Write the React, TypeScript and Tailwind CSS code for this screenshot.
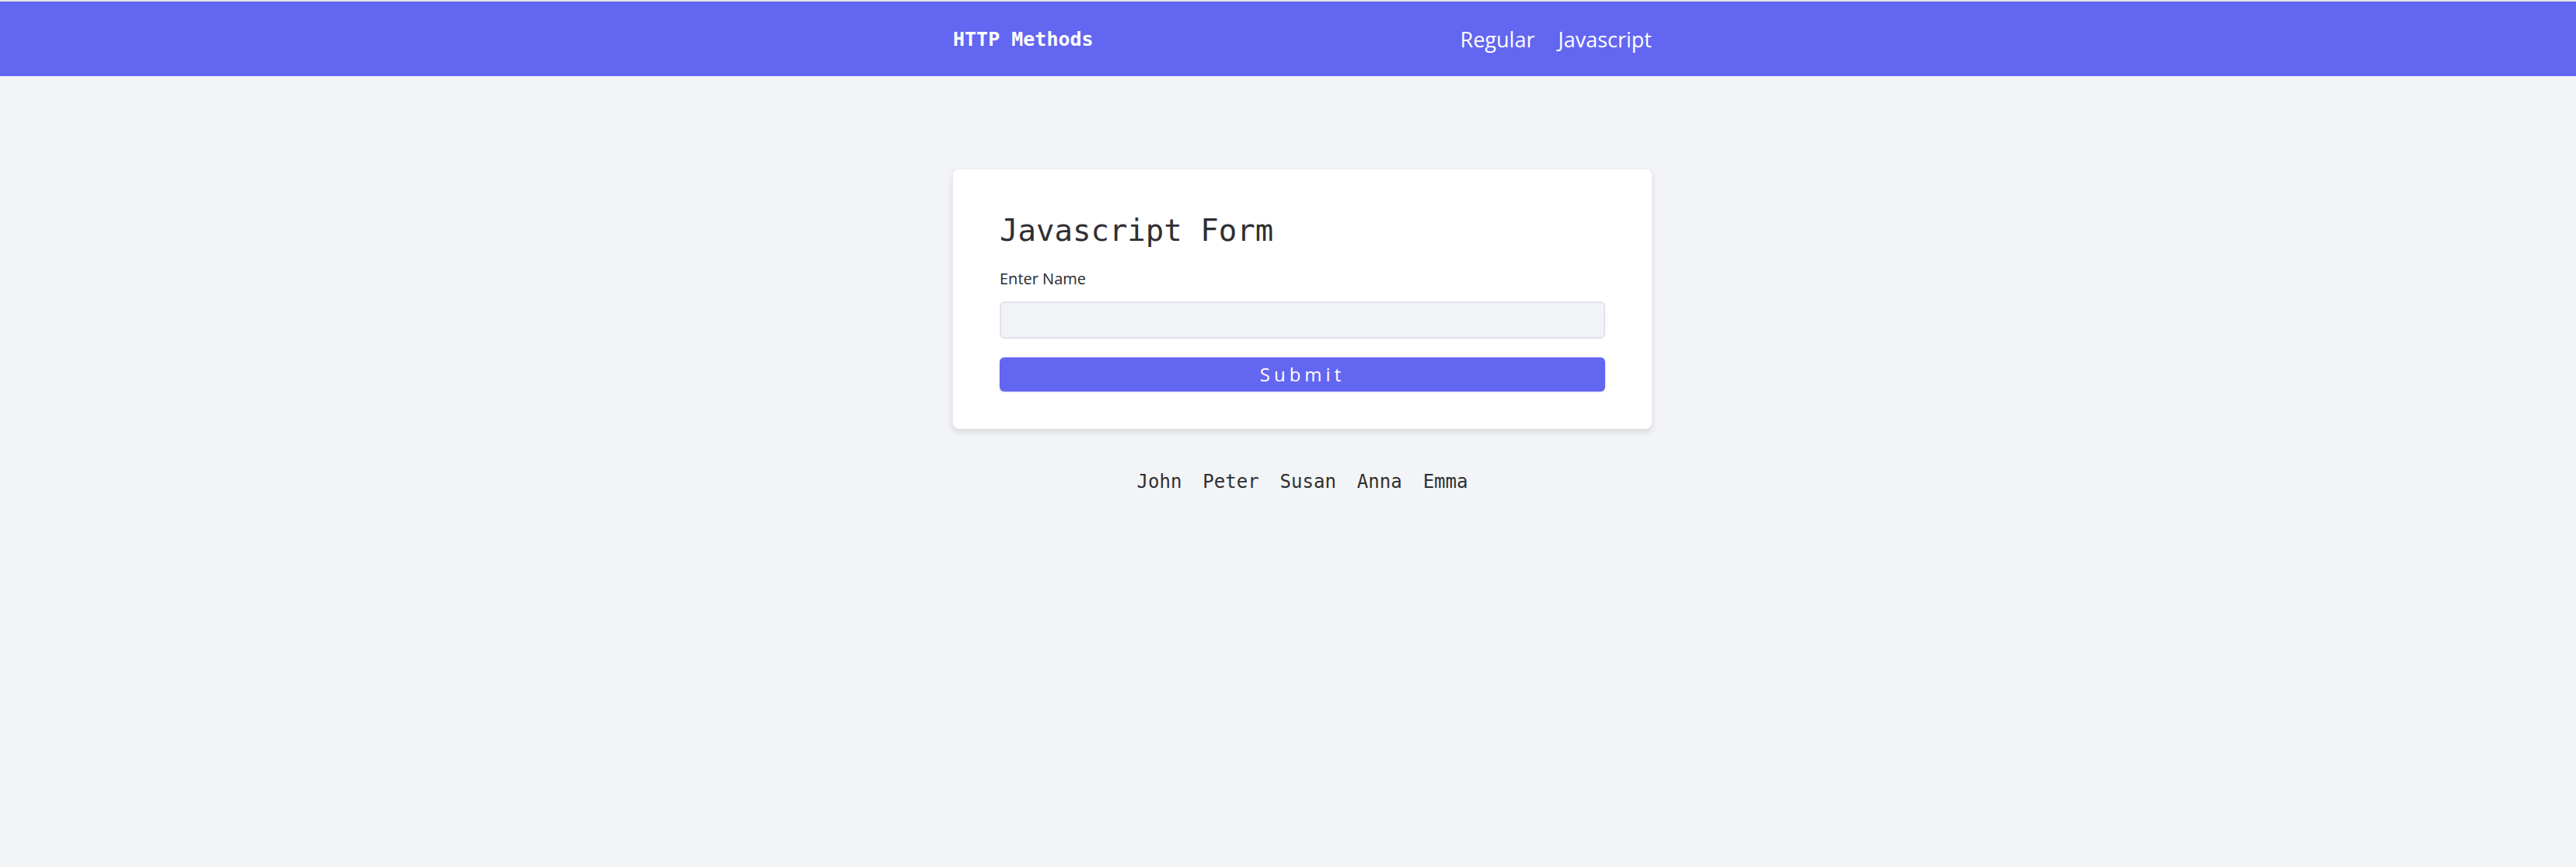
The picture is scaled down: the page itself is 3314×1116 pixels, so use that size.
const mono = "font-['DejaVu_Sans_Mono',monospace]"
const sans = "font-['Open_Sans',sans-serif]"

const names = ["John", "Peter", "Susan", "Anna", "Emma"]

export default function App() {
  return (
    <div className="min-h-[1116px] bg-[#f3f4f7] border-t-2 border-[#e4e4e7]">
      <header className="bg-[#6366f1] text-white">
        <div className="pl-[37px]">
          <nav className="mx-auto flex h-[96px] w-[899px] items-center justify-between">
            <span className={`${mono} text-[25px] font-bold leading-none`}>HTTP Methods</span>
            <div className={`${sans} flex items-center gap-[30px] text-[27px] leading-none`}>
              <a href="#">Regular</a>
              <a href="#">Javascript</a>
            </div>
          </nav>
        </div>
      </header>

      <main className="pl-[37px]">
        <div className="mx-auto mt-[120px] w-[899px]">
          <form
            className="rounded-lg bg-white px-[60px] pt-[59px] pb-[48px] shadow-[0_4px_10px_rgba(0,0,0,0.12)]"
            onSubmit={(e) => e.preventDefault()}
          >
            <h3 className={`${mono} text-[39px] leading-none text-[#2f2f33]`}>Javascript Form</h3>
            <label htmlFor="name" className={`${sans} mt-[33px] block text-[20px] leading-none text-[#2a2a2e]`}>
              Enter Name
            </label>
            <input
              id="name"
              type="text"
              className="mt-[19px] block h-[48px] w-full rounded-md border-2 border-[#dfe3ea] bg-[#f2f3f7] px-3 outline-none"
            />
            <button
              type="submit"
              className={`${sans} mt-[24px] flex h-[44px] w-full items-center justify-center rounded-md bg-[#6366f1] text-[24px] leading-none tracking-[5px] text-white shadow-sm`}
            >
              Submit
            </button>
          </form>

          <div className={`${mono} mt-[56px] flex justify-center gap-[27px] text-[24px] leading-none text-[#2f2f33]`}>
            {names.map((n) => (
              <span key={n}>{n}</span>
            ))}
          </div>
        </div>
      </main>
    </div>
  )
}
